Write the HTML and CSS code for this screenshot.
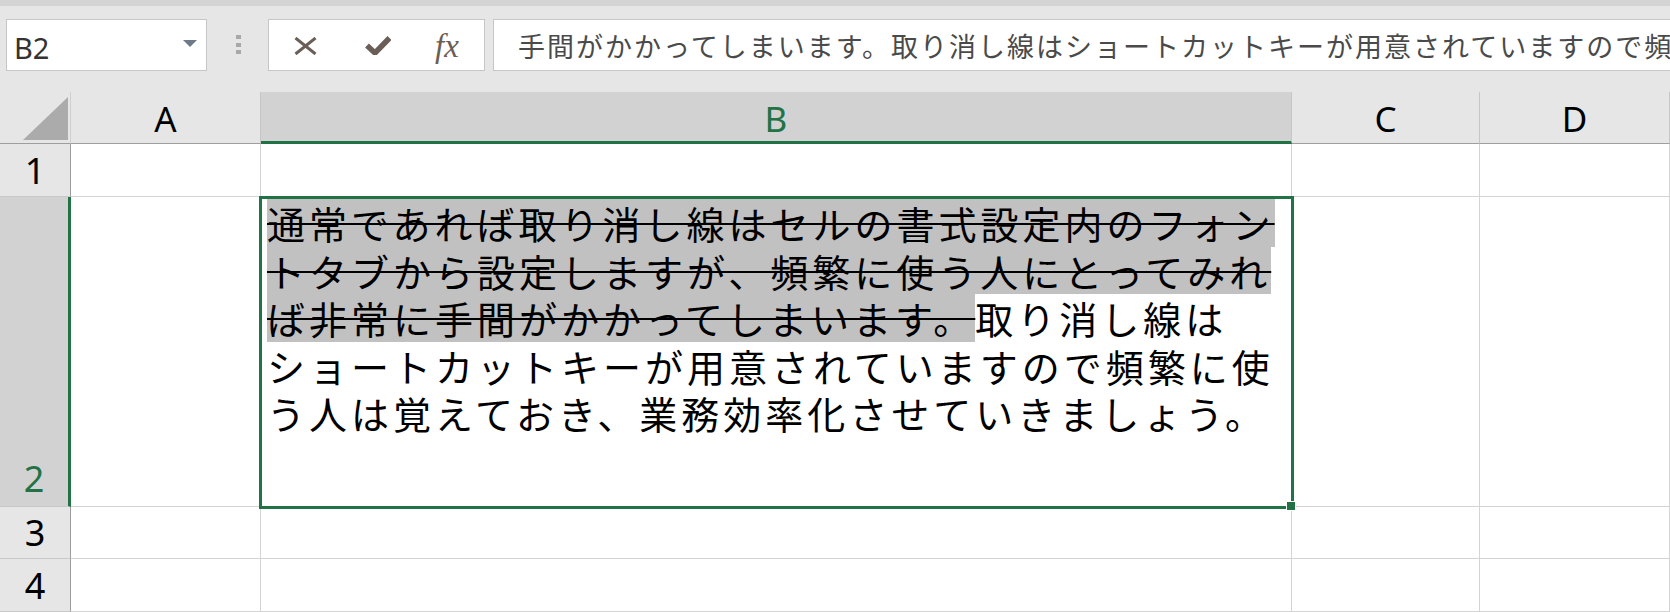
FILE: index.html
```html
<!DOCTYPE html>
<html lang="ja">
<head>
<meta charset="utf-8">
<title>Excel</title>
<link rel="stylesheet" href="styles.css">
</head>
<body>
<div class="topstrip"></div>
<div class="toolbar">
  <div class="namebox"><span class="nb-text">B2</span><span class="nb-arrow"></span></div>
  <div class="grip"><i></i><i></i><i></i></div>
  <div class="fbtns">
    <svg class="ic-x" width="23" height="18" viewBox="0 0 23 18"><path d="M1.5 1 L21.5 17 M21.5 1 L1.5 17" stroke="#6b5e57" stroke-width="3" fill="none"/></svg>
    <svg class="ic-ok" width="26" height="20" viewBox="0 0 26 20"><path d="M2 10.5 L10 18 L24.5 3" stroke="#6b5e57" stroke-width="5.5" fill="none" stroke-linejoin="miter"/></svg>
    <span class="fx">fx</span>
  </div>
  <div class="finput">手間がかかってしまいます。取り消し線はショートカットキーが用意されていますので頻繁に使う人は覚えておき、業務効率化させていきましょう。</div>
</div>
<div class="sheet">
  <div class="corner"><svg width="70" height="51" viewBox="0 0 70 51"><polygon points="23,48 68,48 68,5" fill="#ababab"/></svg></div>
  <div class="ch">A</div>
  <div class="ch sel">B</div>
  <div class="ch">C</div>
  <div class="ch">D</div>

  <div class="rh">1</div>
  <div class="cell"></div>
  <div class="cell"></div>
  <div class="cell"></div>
  <div class="cell"></div>

  <div class="rh sel">2</div>
  <div class="cell"></div>
  <div class="cell active">
    <div class="content">
      <div class="line"><span class="hl">通常であれば取り消し線はセルの書式設定内のフォン</span></div>
      <div class="line"><span class="hl">トタブから設定しますが、頻繁に使う人にとってみれ</span></div>
      <div class="line"><span class="hl">ば非常に手間がかかってしまいます。</span>取り消し線は</div>
      <div class="line">ショートカットキーが用意されていますので頻繁に使</div>
      <div class="line">う人は覚えておき、業務効率化させていきましょう。</div>
    </div>
    <div class="selbox"><div class="handle"></div></div>
  </div>
  <div class="cell"></div>
  <div class="cell"></div>

  <div class="rh">3</div>
  <div class="cell"></div>
  <div class="cell"></div>
  <div class="cell"></div>
  <div class="cell"></div>

  <div class="rh">4</div>
  <div class="cell"></div>
  <div class="cell"></div>
  <div class="cell"></div>
  <div class="cell"></div>
</div>
</body>
</html>
```
FILE: styles.css
```css
html, body {
  margin: 0;
  padding: 0;
}
body {
  width: 1670px;
  height: 612px;
  overflow: hidden;
  background: #e6e6e6;
  font-family: "Noto Sans", "Noto Sans CJK JP", sans-serif;
}
.topstrip {
  height: 6px;
  background: #d4d4d4;
}
.toolbar {
  height: 86px;
  box-sizing: border-box;
  padding-top: 13px;
  display: flex;
  align-items: flex-start;
  overflow: hidden;
  background: #e6e6e6;
}
.namebox {
  margin-left: 6px;
  width: 201px;
  height: 52px;
  box-sizing: border-box;
  border: 1px solid #c6c6c6;
  background: #fff;
  display: flex;
  align-items: center;
  justify-content: space-between;
  padding: 0 9px 0 7px;
}
.nb-text {
  font-size: 29px;
  color: #333;
  padding-top: 5px;
}
.nb-arrow {
  width: 0;
  height: 0;
  border-left: 7px solid transparent;
  border-right: 7px solid transparent;
  border-top: 7px solid #6d7a8a;
  margin-bottom: 4px;
}
.grip {
  margin-left: 29px;
  margin-right: 27px;
  width: 5px;
  padding-top: 16px;
  display: flex;
  flex-direction: column;
  gap: 3.5px;
}
.grip i {
  display: block;
  width: 5px;
  height: 4px;
  background: #a8a8a8;
}
.fbtns {
  width: 217px;
  height: 52px;
  box-sizing: border-box;
  border: 1px solid #c6c6c6;
  background: #fff;
  display: flex;
  align-items: center;
  padding-left: 25px;
}
.ic-x {
  display: block;
  margin-top: 2px;
}
.ic-ok {
  display: block;
  margin-left: 48px;
}
.fx {
  margin-left: 44px;
  font-family: "Liberation Serif", serif;
  font-style: italic;
  font-size: 33px;
  line-height: 1;
  color: #6b5e57;
  margin-top: 2px;
}
.finput {
  margin-left: 8px;
  flex: 1 1 0;
  min-width: 0;
  height: 52px;
  box-sizing: border-box;
  border: 1px solid #c6c6c6;
  border-right: none;
  background: #fff;
  padding-left: 24px;
  display: flex;
  align-items: center;
  white-space: nowrap;
  overflow: hidden;
  font-family: "Noto Sans CJK JP", sans-serif;
  font-size: 27px;
  letter-spacing: 2px;
  color: #4a4a4a;
}
.sheet {
  display: grid;
  grid-template-columns: 71px 190px 1031px 188px 190px;
  grid-template-rows: 52px 53px 310px 52px 53px;
  background: #fff;
}
.corner {
  box-sizing: border-box;
  background: #e6e6e6;
  border-right: 1px solid #cfcfcf;
  border-bottom: 1px solid #9e9e9e;
}
.corner svg {
  display: block;
}
.ch {
  box-sizing: border-box;
  background: #e6e6e6;
  border-right: 1px solid #c6c6c6;
  border-bottom: 1px solid #9e9e9e;
  text-align: center;
  font-size: 35px;
  line-height: 52px;
  padding-top: 1px;
  color: #000;
}
.ch.sel {
  background: #d2d2d2;
  border-bottom: 3px solid #217346;
  color: #217346;
}
.rh {
  box-sizing: border-box;
  background: #e6e6e6;
  border-right: 1px solid #9e9e9e;
  border-bottom: 1px solid #c8c8c8;
  display: flex;
  align-items: flex-end;
  justify-content: center;
  font-size: 36px;
  line-height: 36px;
  padding-bottom: 7px;
  color: #000;
}
.rh.sel {
  background: #d2d2d2;
  border-right: 3px solid #217346;
  color: #217346;
  padding-bottom: 9px;
}
.cell {
  box-sizing: border-box;
  background: #fff;
  border-right: 1px solid #d4d4d4;
  border-bottom: 1px solid #d4d4d4;
}
.cell.active {
  position: relative;
}
.content {
  padding: 2px 0 0 6px;
  font-family: "Noto Sans CJK JP", sans-serif;
  font-size: 38px;
  font-weight: 400;
  letter-spacing: 4px;
  color: #000;
  text-spacing-trim: space-all;
}
.line {
  height: 47.6px;
  line-height: 47.6px;
  white-space: nowrap;
}
.hl {
  display: inline-block;
  vertical-align: top;
  background: #c1c1c1;
  text-decoration: line-through;
  text-decoration-thickness: 2px;
}
.selbox {
  position: absolute;
  top: -1px;
  left: -2px;
  right: -3px;
  bottom: -3px;
  border: 3px solid #217346;
  pointer-events: none;
}
.handle {
  position: absolute;
  right: -5px;
  bottom: -5px;
  width: 8px;
  height: 8px;
  background: #217346;
  border: 1px solid #fff;
}
```
